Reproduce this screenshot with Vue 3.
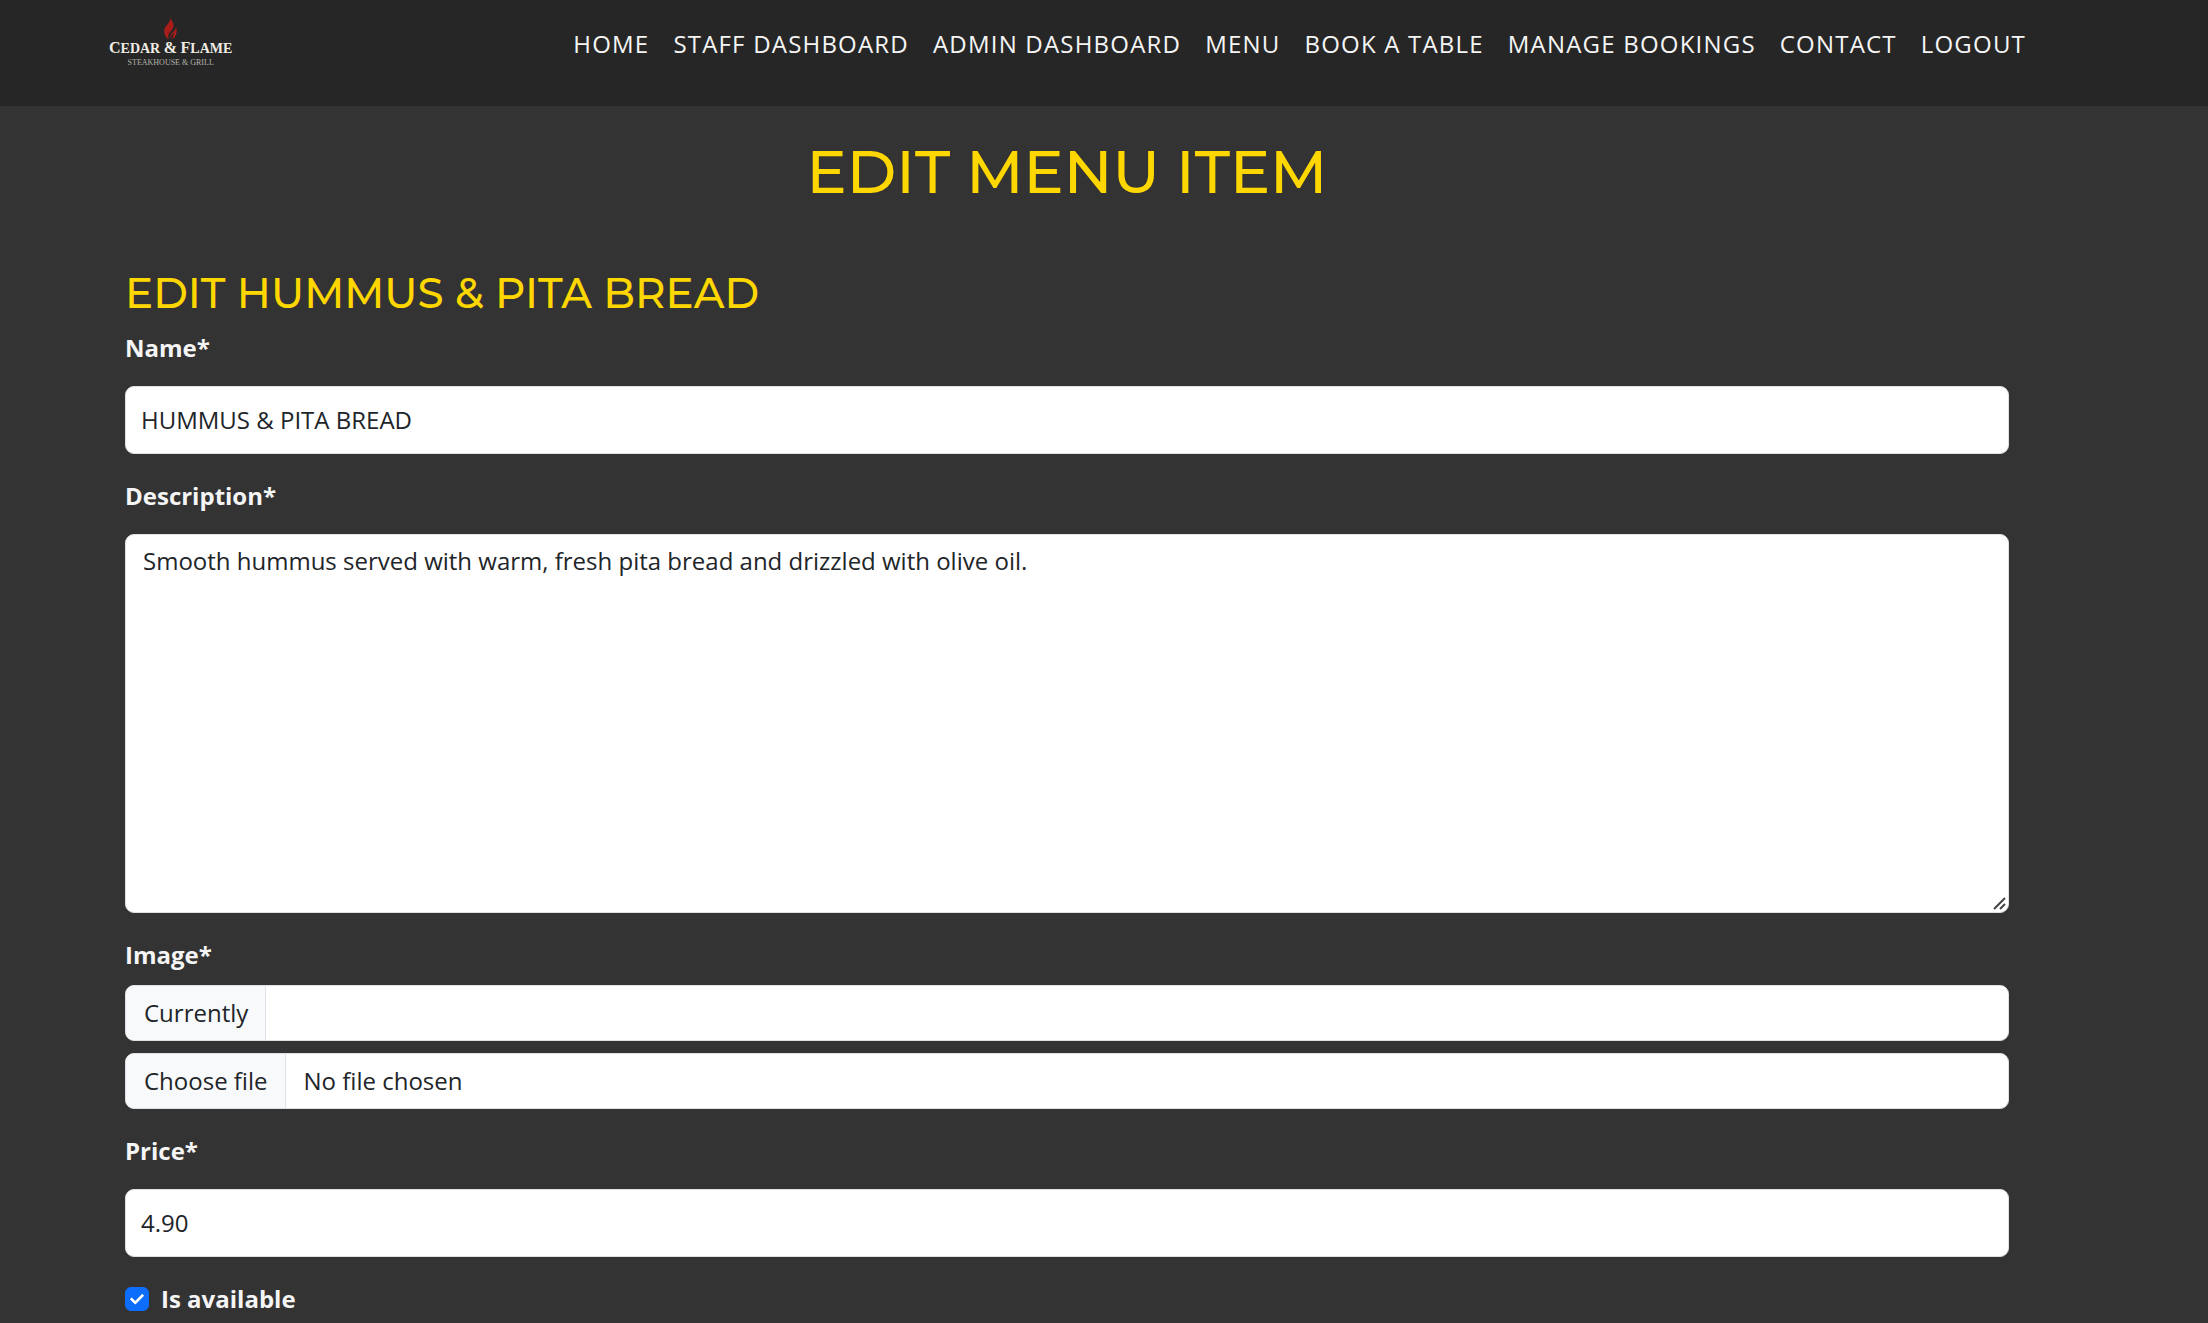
<script setup>
import { ref } from 'vue'

const links = [
  'Home',
  'Staff Dashboard',
  'Admin Dashboard',
  'Menu',
  'Book a Table',
  'Manage Bookings',
  'Contact',
  'Logout',
]

const name = ref('HUMMUS & PITA BREAD')
const description = ref(
  'Smooth hummus served with warm, fresh pita bread and drizzled with olive oil.'
)
const price = ref('4.90')
const available = ref(true)
</script>

<template>
  <div class="page">
    <header class="topbar">
      <a class="brand" href="#" aria-label="Cedar &amp; Flame">
        <svg class="flame" viewBox="0 0 26 42" aria-hidden="true">
          <path
            d="M12 0c1 6-3 10-8 16C0 21-1 28 2 34c1 4 4 7 8 8-2-4-2-7 0-11 3-5 8-8 9-14C20 10 16 5 12 0z"
          />
          <path d="M24 17c0 6-4 9-8 13-4 4-4 8-2 12 6-1 10-5 11-12 1-5 0-9-1-13z" />
          <path class="core" d="M19 28c0 4-4 6-5 9 0 2 0 3 1 5 3-3 5-8 4-14z" />
        </svg>
        <span class="brand-name"
          ><b>C</b>EDAR <b>&amp;</b> <b>F</b>LAME</span
        >
        <span class="brand-tag">STEAKHOUSE &amp; GRILL</span>
      </a>
      <nav class="nav">
        <a v-for="link in links" :key="link" href="#">{{ link }}</a>
      </nav>
    </header>

    <main class="content">
      <h1>EDIT MENU ITEM</h1>
      <form class="form" @submit.prevent>
        <h2>EDIT HUMMUS &amp; PITA BREAD</h2>

        <div class="field">
          <label for="name">Name*</label>
          <input id="name" v-model="name" class="control text" type="text" />
        </div>

        <div class="field">
          <label for="description">Description*</label>
          <div class="area-wrap">
            <textarea id="description" v-model="description" class="control area"></textarea>
            <svg class="grip" viewBox="0 0 14 14" aria-hidden="true">
              <path d="M1 12 12 1M7 12l5-5" />
            </svg>
          </div>
        </div>

        <div class="field files">
          <label for="image">Image*</label>
          <div class="control group">
            <span class="addon">Currently</span>
          </div>
          <label class="control group picker" for="image">
            <span class="addon">Choose file</span>
            <span class="filename">No file chosen</span>
            <input id="image" class="file" type="file" />
          </label>
        </div>

        <div class="field">
          <label for="price">Price*</label>
          <input id="price" v-model="price" class="control text" type="text" />
        </div>

        <div class="check">
          <input id="available" v-model="available" type="checkbox" />
          <label for="available">Is available</label>
        </div>
      </form>
    </main>
  </div>
</template>

<style>
body {
  margin: 0;
  background: #333;
}
</style>

<style scoped>
.page,
.page * {
  box-sizing: border-box;
}

.page {
  height: 100vh;
  overflow: hidden;
  background: #333;
  color: #f5f5f5;
  font: 400 24px/36px 'Open Sans', sans-serif;
}

.topbar {
  display: flex;
  justify-content: space-between;
  align-items: flex-start;
  height: 106px;
  padding: 18px 182px 0 109px;
  background: #262626;
}

.brand {
  display: flex;
  flex-direction: column;
  align-items: center;
  color: #f0ede4;
  text-decoration: none;
  font-family: 'Liberation Serif', serif;
}

.flame {
  width: 13px;
  height: 21px;
  fill: #a81c1c;
}

.core {
  fill: #262626;
}

.brand-name {
  font-size: 14px;
  line-height: 18px;
  font-weight: 700;
}

.brand-name b {
  font-size: 16px;
}

.brand-tag {
  font-size: 8px;
  line-height: 10px;
  color: #b5b3ad;
}

.nav {
  display: flex;
  gap: 24px;
  padding-top: 8px;
}

.nav a {
  color: #f5f5f5;
  font-weight: 500;
  letter-spacing: 0.05em;
  text-decoration: none;
  text-transform: uppercase;
  white-space: nowrap;
}

.content {
  padding: 36px 199px 0 125px;
}

h1,
h2 {
  margin: 0;
  color: #ffd700;
  font-family: Montserrat, Inter, sans-serif;
  font-weight: 500;
}

h1 {
  font-size: 60px;
  line-height: 60px;
  text-align: center;
}

h2 {
  margin: 66px 0 12px;
  font-size: 42px;
  line-height: 50px;
}

.field {
  display: flex;
  flex-direction: column;
  gap: 20px;
  margin-bottom: 24px;
}

.files {
  gap: 12px;
}

label {
  font-weight: 700;
}

.control {
  display: block;
  width: 100%;
  margin: 0;
  border: 1px solid #dee2e6;
  border-radius: 9px;
  background: #fff;
  color: #212529;
  font: 400 24px/36px 'Open Sans', sans-serif;
}

.text {
  height: 68px;
  padding: 14px 15px 16px;
}

.area-wrap {
  position: relative;
}

.area {
  height: 379px;
  padding: 8px 17px;
  resize: vertical;
}

.area::-webkit-resizer {
  background: transparent;
}

.grip {
  position: absolute;
  right: 2px;
  bottom: 2px;
  width: 14px;
  height: 14px;
  fill: none;
  stroke: #444;
  stroke-width: 2;
  pointer-events: none;
}

.group {
  position: relative;
  display: flex;
  height: 56px;
  overflow: hidden;
}

.addon {
  padding: 9px 17px 9px 18px;
  border-right: 1px solid #dee2e6;
  background: #f8f9fa;
}

.filename {
  padding: 9px 18px;
}

.file {
  position: absolute;
  inset: 0;
  opacity: 0;
}

.check {
  display: flex;
  align-items: center;
  gap: 12px;
}

.check input {
  display: grid;
  place-items: center;
  width: 24px;
  height: 24px;
  margin: 0;
  appearance: none;
  border: 1px solid #dee2e6;
  border-radius: 6px;
  background: #fff;
}

.check input:checked {
  border-color: #0d6efd;
  background: #0d6efd;
}

.check input:checked::after {
  content: '';
  box-sizing: border-box;
  width: 8px;
  height: 13px;
  margin-bottom: 4px;
  border: solid #fff;
  border-width: 0 3px 3px 0;
  border-radius: 1px;
  transform: rotate(45deg);
}
</style>
